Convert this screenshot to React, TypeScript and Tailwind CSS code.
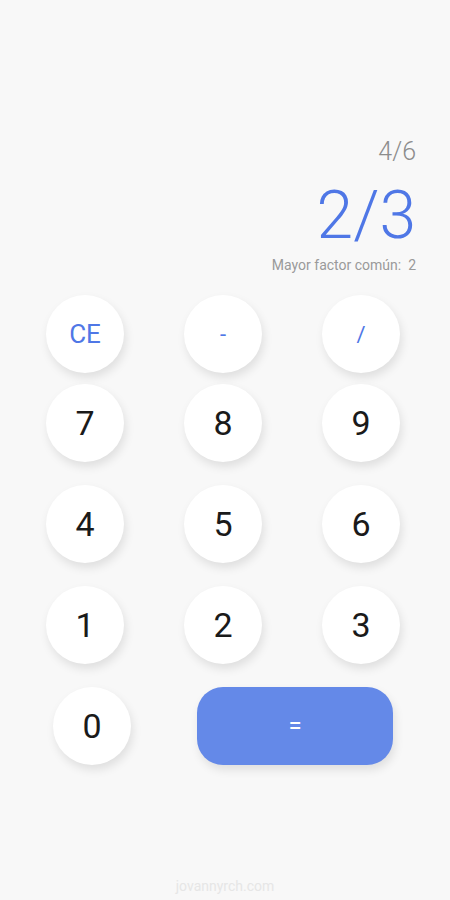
const font = { fontFamily: 'Roboto, "Noto Sans", sans-serif' };

type KeyProps = { label: string; kind?: 'num' | 'op' | 'ce' };

const Key = ({ label, kind = 'num' }: KeyProps) => {
  const text =
    kind === 'num'
      ? 'text-[34px] text-[#1a1a1a]'
      : kind === 'ce'
        ? 'text-[26px] text-[#4f77e6]'
        : 'text-[22px] text-[#4f77e6]';
  return (
    <button
      className={`w-[78px] h-[78px] rounded-full bg-white flex items-center justify-center shadow-[2px_5px_10px_rgba(0,0,0,0.10)] ${text}`}
    >
      {label}
    </button>
  );
};

const rows: KeyProps[][] = [
  [{ label: '7' }, { label: '8' }, { label: '9' }],
  [{ label: '4' }, { label: '5' }, { label: '6' }],
  [{ label: '1' }, { label: '2' }, { label: '3' }],
];

export default function App() {
  return (
    <div style={font} className="h-[900px] w-full bg-[#f8f8f8] flex flex-col">
      {/* Display */}
      <div className="pt-[138px] pr-[34px] flex flex-col items-end">
        <div className="text-[25px] leading-[28px] font-light text-[#8c8c8c]">4/6</div>
        <div className="mt-[17px] text-[66px] leading-none font-light text-[#4f77e6]">2/3</div>
        <div className="mt-[8px] text-[14px] leading-[16px] text-[#9a9a9a] whitespace-pre">
          Mayor factor común:  2
        </div>
      </div>

      {/* Keypad */}
      <div className="mt-[22px] flex flex-col">
        <div className="flex pl-[46px] gap-[60px]">
          <Key label="CE" kind="ce" />
          <Key label="-" kind="op" />
          <Key label="/" kind="op" />
        </div>
        {rows.map((row, i) => (
          <div key={i} className={`flex pl-[46px] gap-[60px] ${i === 0 ? 'mt-[11px]' : 'mt-[23px]'}`}>
            {row.map((k) => (
              <Key key={k.label} {...k} />
            ))}
          </div>
        ))}
        <div className="mt-[23px] flex items-center pl-[53px] gap-[66px]">
          <Key label="0" />
          <button className="w-[196px] h-[78px] rounded-[26px] bg-[#6489e8] text-white text-[24px] flex items-center justify-center shadow-[2px_5px_10px_rgba(0,0,0,0.10)]">
            =
          </button>
        </div>
      </div>

      {/* Footer */}
      <div className="mt-auto pb-[5px] text-center text-[14px] leading-[18px] text-[#e6e6e6]">
        jovannyrch.com
      </div>
    </div>
  );
}
